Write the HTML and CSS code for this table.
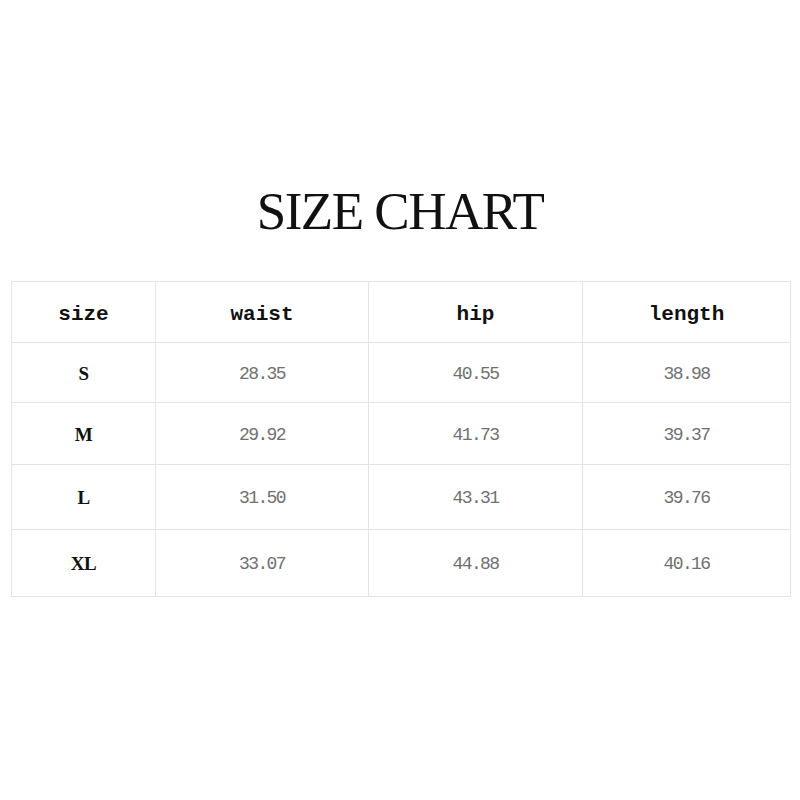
FILE: index.html
```html
<!DOCTYPE html>
<html>
<head>
<meta charset="utf-8">
<link rel="stylesheet" href="styles.css">
</head>
<body>
<div class="page">
  <h1 class="title">SIZE CHART</h1>
  <table class="chart">
    <colgroup>
      <col class="c1"><col class="c2"><col class="c3"><col class="c4">
    </colgroup>
    <thead>
      <tr class="r-head"><th>size</th><th>waist</th><th>hip</th><th>length</th></tr>
    </thead>
    <tbody>
      <tr class="r1"><td class="sz">S</td><td>28.35</td><td>40.55</td><td>38.98</td></tr>
      <tr class="r2"><td class="sz">M</td><td>29.92</td><td>41.73</td><td>39.37</td></tr>
      <tr class="r3"><td class="sz">L</td><td>31.50</td><td>43.31</td><td>39.76</td></tr>
      <tr class="r4"><td class="sz">XL</td><td>33.07</td><td>44.88</td><td>40.16</td></tr>
    </tbody>
  </table>
</div>
</body>
</html>
```
FILE: styles.css
```css
html, body {
  margin: 0;
  padding: 0;
  background: #ffffff;
}
.page {
  width: 800px;
  height: 800px;
  padding-top: 185px;
  box-sizing: border-box;
}
.title {
  margin: 0;
  font-family: "Liberation Serif", serif;
  font-weight: normal;
  font-size: 53px;
  line-height: 53px;
  text-align: center;
  color: #111;
  letter-spacing: -1.5px;
}
.chart {
  margin: 43px 0 0 11px;
  border-collapse: collapse;
  table-layout: fixed;
  width: 779px;
}
.c1 { width: 144px; }
.c2 { width: 213px; }
.c3 { width: 214px; }
.c4 { width: 208px; }
.chart th, .chart td {
  border: 1px solid #e4e4e4;
  text-align: center;
  padding: 0;
  font-family: "Liberation Mono", monospace;
}
.chart th {
  font-size: 21px;
  font-weight: bold;
  color: #111;
  padding-top: 5px;
}
.chart td {
  font-size: 18px;
  letter-spacing: -1.6px;
  color: #707070;
  padding-top: 2px;
}
.chart td.sz {
  font-family: "Liberation Serif", serif;
  font-size: 19px;
  color: #111;
  font-weight: bold;
  letter-spacing: -0.5px;
}
.r-head { height: 61px; }
.r1 { height: 60px; }
.r2 { height: 62px; }
.r3 { height: 65px; }
.r4 { height: 67px; }
```
